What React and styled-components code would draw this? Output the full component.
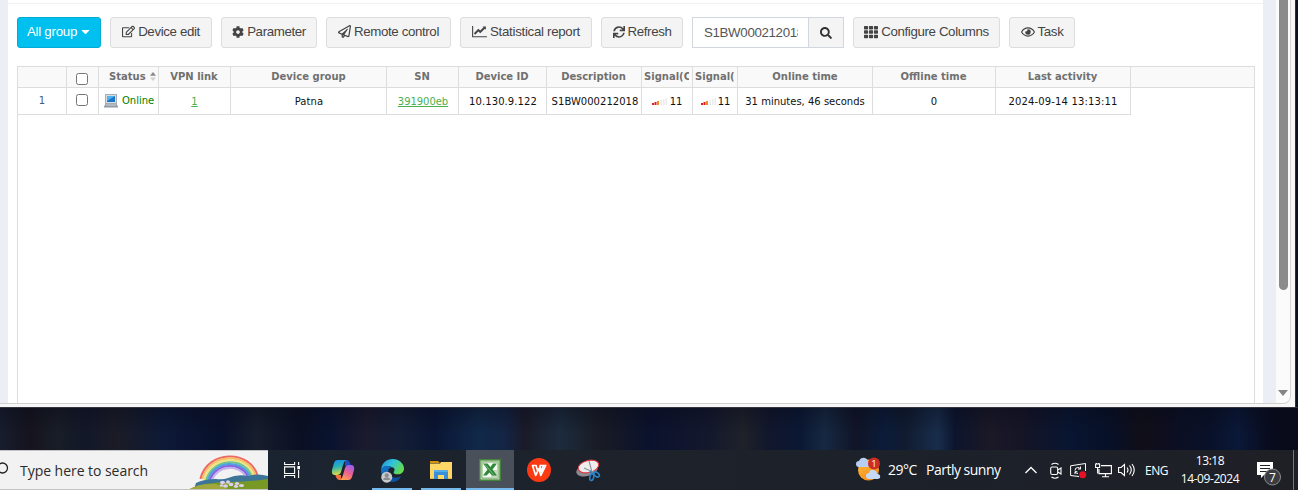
import React from "react";
import styled, { createGlobalStyle } from "styled-components";
import { FaRegEdit, FaCog, FaRegPaperPlane, FaSearch, FaTh, FaRegEye, FaSync, FaCaretDown } from "react-icons/fa";

const GlobalStyle = createGlobalStyle`
  * { box-sizing: border-box; }
  body { margin: 0; background: #0a0f20; overflow: hidden; }
`;

const Desktop = styled.div`
  width: 1298px;
  height: 490px;
  overflow: hidden;
  display: flex;
  flex-direction: column;
  background: #0a0f20;
`;

const BrowserWindow = styled.div`
  width: 1296px;
  height: 407px;
  display: flex;
  flex: none;
  padding: 0 4px 3px 0;
  background: #f7f7f7;
  border-right: 1px solid #2b2e3c;
`;

const Viewport = styled.div`
  display: flex;
  flex: 1;
  background: #ebeff5;
  border-right: 1px solid #d5d5d5;
  border-bottom: 1px solid #d0d0d0;
  border-bottom-right-radius: 8px;
  overflow: hidden;
  padding-left: 8px;
`;

const Panel = styled.main`
  width: 1255px;
  height: 403px;
  background: #fff;
  padding: 3px 8px 0 9px;
  background-image: linear-gradient(#f1f1f1, #f1f1f1);
  background-size: 100% 1px;
  background-position: 0 3px;
  background-repeat: no-repeat;
`;

const Toolbar = styled.div`
  display: flex;
  gap: 9px;
  margin-top: 14px;
  height: 31px;
`;

const Button = styled.button`
  width: ${(p) => p.$w}px;
  height: 31px;
  display: flex;
  align-items: center;
  justify-content: center;
  gap: ${(p) => (p.$primary ? 2 : 3)}px;
  padding: ${(p) => (p.$primary ? "0 0 2px 1px" : "0 0 2px")};
  border-radius: 3px;
  border: 1px solid ${(p) => (p.$primary ? "#00acd6" : "#ddd")};
  background: ${(p) => (p.$primary ? "#00c0ef" : "#f4f4f4")};
  color: ${(p) => (p.$primary ? "#fff" : "#444")};
  font: 13.3px "Liberation Sans", Arial, sans-serif;
  letter-spacing: ${(p) => p.$ls ?? -0.37}px;
  white-space: nowrap;
  svg { flex: none; }
`;

const SearchGroup = styled.div`
  display: flex;
  width: 152px;
  border: 1px solid #d2d6de;
`;

const SearchField = styled.div`
  width: 116px;
  padding: 0 10px 0 11px;
  border-right: 1px solid #d2d6de;
  font: 13.3px/29px "Liberation Sans", Arial, sans-serif;
  color: #555;
  letter-spacing: -0.34px;
  span { display: block; overflow: hidden; white-space: nowrap; }
`;

const SearchButton = styled.div`
  flex: 1;
  display: flex;
  align-items: center;
  justify-content: center;
  background: #f4f4f4;
  color: #333;
`;

const Grid = styled.section`
  width: 1238px;
  height: 337px;
  margin-top: 18px;
  border: 1px solid #ddd;
  border-bottom: 0;
  font-family: "DejaVu Sans", Verdana, sans-serif;
  font-size: 10px;
`;

const Row = styled.div`
  display: grid;
  grid-template-columns: 49px 32px 60px 72px 156px 72px 88px 95px 51px 45px 135px 123px 135px 123px;
  height: ${(p) => (p.$head ? 21 : 27)}px;
  background: ${(p) => (p.$head ? "#f9f9f9" : "#fff")};
  font-weight: ${(p) => (p.$head ? "bold" : "normal")};
  color: ${(p) => (p.$head ? "#707070" : "#111")};
`;

const Cell = styled.div`
  display: flex;
  align-items: center;
  justify-content: ${(p) => (p.$start ? "flex-start" : "center")};
  padding: ${(p) => p.$pad || "0 0 1px"};
  border-right: ${(p) => (p.$last ? "0" : "1px solid #ddd")};
  border-bottom: 1px solid #ddd;
  overflow: hidden;
  white-space: nowrap;
  letter-spacing: ${(p) => p.$ls || 0}px;
  color: ${(p) => p.$color || "inherit"};
`;

const Value = styled(Cell)`
  padding: 1px 0 0 ${(p) => p.$indent || 0}px;
`;

const Clip = styled.span`
  display: block;
  width: ${(p) => p.$w}px;
  overflow: hidden;
`;

const Check = styled.span`
  width: 12px;
  height: 12px;
  border: 1px solid #767676;
  border-radius: 2.5px;
  background: #fff;
`;

const Link = styled.a`
  color: #4caf50;
  text-decoration: underline;
`;

const ScrollTrack = styled.div`
  margin-left: 13px;
  width: 15px;
  height: 403px;
  background: #fbfbfb;
  display: flex;
  flex-direction: column;
  align-items: center;
  justify-content: space-between;
  padding-bottom: 7px;
`;

const Thumb = styled.div`
  width: 9px;
  height: 290px;
  background: #8b8b8b;
  border-radius: 0 0 5px 5px;
`;

const Wallpaper = styled.div`
  height: 43px;
  flex: none;
  border-top: 1px solid #34343c;
  background:
    linear-gradient(rgba(8, 10, 24, 0.45), rgba(8, 10, 24, 0.12) 60%),
    linear-gradient(90deg, #191f30 0, #17151f 30px, #1b2029 58px, #14192b 85px, #1d1e28 118px, #0d1b3b 165px,
      #08112d 222px, #18202f 257px, #0b1024 300px, #091432 330px, #1e1c30 365px, #142039 400px, #0a1737 435px,
      #122d50 478px, #15284a 505px, #1d1c2b 525px, #1f3042 560px, #1b1d26 600px, #0b1330 650px, #161a30 710px,
      #22252b 743px, #121830 770px, #0b1a38 800px, #182d48 825px, #121629 855px, #0b1e3e 885px, #121d33 905px,
      #1a3252 938px, #0d1630 955px, #1e1a28 990px, #161629 1025px, #081735 1070px, #071129 1110px, #110f18 1140px,
      #0c1025 1180px, #09122b 1210px, #0b1a3d 1238px, #080b1d 1270px, #090b1b 1298px);
`;

const Taskbar = styled.footer`
  height: 40px;
  flex: none;
  display: flex;
  background: linear-gradient(90deg, #1a2430 268px, #1c232d 420px, #1e222a 650px, #1c212a 900px, #1f2026 1298px);
  font-family: "Open Sans", "Noto Sans", sans-serif;
  color: #fff;
`;

const SearchBox = styled.div`
  width: 268px;
  height: 40px;
  display: flex;
  align-items: center;
  background: #f2f2f2;
  border-top: 1px solid #c4c4c4;
  border-bottom: 1px solid #c4c4c4;
  color: #2b2b2b;
  font-size: 14px;
  overflow: hidden;
`;

const SearchText = styled.span`
  width: 168px;
  margin-left: 11px;
  padding-top: 1px;
  letter-spacing: -0.04px;
  white-space: nowrap;
`;

const Task = styled.div`
  width: 48px;
  height: 40px;
  margin-left: 1px;
  display: flex;
  align-items: center;
  justify-content: center;
  background: ${(p) => (p.$active ? "#4a5059" : "transparent")};
  box-shadow: ${(p) => (p.$active ? "inset 0 -2px #76b9ed" : "none")};
  ${(p) => p.$open && "background: linear-gradient(#76b9ed, #76b9ed) 4px 38px / 40px 2px no-repeat;"}
`;

const TaskList = styled.div`
  display: flex;
  width: 588px;
  padding-left: 1px;
`;

const Slot = styled.div`
  width: ${(p) => p.$w}px;
  height: 40px;
  flex: none;
  display: flex;
  align-items: center;
  padding-top: ${(p) => p.$drop || 0}px;
  padding-bottom: ${(p) => p.$lift || 0}px;
  font-size: ${(p) => p.$size || 14}px;
  letter-spacing: ${(p) => p.$ls || 0}px;
  white-space: nowrap;
`;

const Clock = styled.div`
  width: 70px;
  height: 40px;
  display: flex;
  flex-direction: column;
  align-items: center;
  padding-top: 2px;
  font-size: 12px;
  line-height: 18px;
  letter-spacing: -0.42px;
  white-space: nowrap;
`;

const ShowDesktop = styled.div`
  width: 5px;
  height: 40px;
  border-left: 1px solid #73757a;
`;

const ChartIcon = () => (
  <svg width="15" height="13" viewBox="0 0 16 14" fill="currentColor">
    <path d="M0 1h1.2v11H16v1.2H0z" />
    <path d="M14.9 1.5v3.6l-1.1-1.1-5 5-2-2-3.4 3.4-1.5-1.5 4.9-4.9 2 2 3.5-3.5-1.1-1z" />
  </svg>
);

const SortIcon = () => (
  <svg width="6" height="9" viewBox="0 0 6 9">
    <path d="M0 3.8 3 0l3 3.8z" fill="#888" />
    <path d="M0 5.5h6L3 9z" fill="#d0d0d0" />
  </svg>
);

const ComputerIcon = () => (
  <svg width="14" height="14" viewBox="0 0 14 14">
    <rect x="1.5" y=".5" width="11" height="9" fill="#d8dde2" stroke="#a5adb5" />
    <rect x="3" y="2" width="8" height="6" fill="#1976ca" />
    <path d="M3 2h8L3 7z" fill="#50b5ee" />
    <path d="M1.5 10h11l1.5 2.5v1H0v-1z" fill="#8e9aa5" />
    <path d="M2 11h10" stroke="#d3d9df" />
  </svg>
);

const SignalIcon = () => (
  <svg width="16" height="7" viewBox="0 0 16 7">
    <path d="M0 5h2v2H0z M2.5 4h2v3h-2z" fill="#e21b22" />
    <path d="M5 3h2v4H5z" fill="#f58a20" />
    <path d="M8.5 2h1.5v5H8.5z M11 1h1.5v6H11z M13.5 0H15v7h-1.5z" fill="#ebebeb" />
  </svg>
);

const RainbowArt = () => (
  <svg width="80" height="38" viewBox="188 451 80 38">
    <g fill="none" strokeWidth="2.1">
      <path d="M200.500 479C207 449.500 251 449.500 257.500 476" stroke="#ee6865" />
      <path d="M202.400 479C209 452 249 452 255.500 476" stroke="#f7bd68" />
      <path d="M204.300 480C211 454.500 247 454.500 253.500 476" stroke="#efe580" />
      <path d="M206.200 480C213 457 245 457 251.500 476" stroke="#72c58c" />
      <path d="M208.100 480C214 459.500 243 459.500 249.500 476" stroke="#4fa0e3" />
      <path d="M210 480C216 462 241 462 247.500 476" stroke="#8760dc" />
      <path d="M212 480C218 464.500 239 464.500 245.500 476" stroke="#c3b0ee" />
    </g>
    <path d="M196 483q8-4 20-4 7 1 12-1 9-4 20-2 10-3 20 0v13h-74z" fill="#3d7599" />
    <path d="M188 490q15-8 41-8 20 0 39-3v11z" fill="#789a24" />
    <path d="M188 490q9-7 28-6l14 6z" fill="#a1a73c" />
    <g fill="#dcd0f2">
      <ellipse cx="222.500" cy="482.500" rx="2.500" ry="1.700" /><ellipse cx="228" cy="482" rx="2" ry="1.700" />
      <ellipse cx="225.500" cy="486" rx="2.500" ry="1.700" /><ellipse cx="221.500" cy="485.500" rx="1.700" ry="1.200" />
      <ellipse cx="231" cy="484.500" rx="2.300" ry="1.700" /><ellipse cx="237" cy="483.500" rx="2.200" ry="1.600" />
      <ellipse cx="236" cy="486.500" rx="2.200" ry="1.400" /><ellipse cx="241.500" cy="485.500" rx="2.600" ry="1.600" />
    </g>
    <circle cx="225.500" cy="484" r=".9" fill="#e0a840" /><circle cx="238" cy="485" r=".7" fill="#e0a840" />
  </svg>
);

const TaskViewIcon = () => (
  <svg width="20" height="16" viewBox="0 0 20 16" fill="none" stroke="#fff" strokeWidth="1.1">
    <path d="M.6 0v2.500h10V0 M.6 4.900h10v6.600H.6z M.6 16v-2.500h10V16 M14.600 0v3 M14.600 8v8" />
    <path d="M13.300 4h2.700v3.200h-2.700z" fill="#fff" stroke="none" />
  </svg>
);

const CopilotIcon = () => (
  <svg width="24" height="24" viewBox="0 0 24 24">
    <defs>
      <linearGradient id="cpA" x1="0" y1="0" x2=".2" y2="1"><stop stopColor="#168df0" /><stop offset=".5" stopColor="#28b3b4" /><stop offset="1" stopColor="#d7d944" /></linearGradient>
      <linearGradient id="cpB" x1=".7" y1="0" x2=".2" y2="1"><stop stopColor="#a15bef" /><stop offset=".5" stopColor="#ef638b" /><stop offset="1" stopColor="#ffa54d" /></linearGradient>
    </defs>
    <path d="M14 2h2q2 0 3 3l1 3h-6z" fill="#1c4cc8" />
    <path d="M6.500 2H15q-2 1-3 5l-2 7q-1 3-4 3H4q-4 0-3-5l2-7q1-3 3.500-3z" fill="url(#cpA)" />
    <path d="M17.500 22H9q2-1 3-5l2-7q1-3 4-3h2q4 0 3 5l-2 7q-1 3-3.500 3z" fill="url(#cpB)" />
    <path d="M10 22H8q-2 0-3-3l-.7-2H10z" fill="#f3703f" />
  </svg>
);

const EdgeIcon = () => (
  <svg width="25" height="25" viewBox="0 0 26 26">
    <defs>
      <linearGradient id="edA" x1="0" y1="0" x2="1" y2=".5"><stop stopColor="#2389d8" /><stop offset=".5" stopColor="#30c3da" /><stop offset="1" stopColor="#63da50" /></linearGradient>
      <linearGradient id="edB" x1="0" y1="0" x2="1" y2="1"><stop stopColor="#1479cd" /><stop offset="1" stopColor="#0b4793" /></linearGradient>
    </defs>
    <path d="M1 12C2 5 7 1 13 1c7 0 12 5 12 10 0 4-3 6-6.500 6-3 0-5-1-4-3 1-1 1-3-1-4C9 7 3 8 1 12z" fill="url(#edA)" />
    <path d="M1 12c2-4 8-5 12-2-4-1-5 3-4 6 1 4 7 6 13 3-2 4-5 6-9 6C6 25 1 20 1 12z" fill="url(#edB)" />
    <circle cx="7" cy="20" r="5.700" fill="#c7c9ca" />
    <circle cx="7" cy="18" r="2.200" fill="#8a8d90" />
    <path d="M3.400 23q0-3 3.600-3t3.600 3z" fill="#8a8d90" />
  </svg>
);

const ExplorerIcon = () => (
  <svg width="22" height="20" viewBox="0 0 22 20">
    <path d="M0 1h8l2 2H0z" fill="#d99009" />
    <path d="M0 3.500h10l1-1.500h11v17H0z" fill="#ffd766" />
    <path d="M4 19v-8q0-1 1-1h12q1 0 1 1v8h-4v-4H8v4z" fill="#3990d9" />
    <path d="M4 12v-1q0-1 1-1h12q1 0 1 1v1z" fill="#56ade9" />
    <path d="M0 18h4v1H0zM18 18h4v1h-4z" fill="#edb940" />
  </svg>
);

const ExcelIcon = () => (
  <svg width="22" height="22" viewBox="0 0 22 22">
    <path d="M.75.75h20.500v20.500H.75z" fill="#b9d6ae" stroke="#44833d" strokeWidth="1.500" />
    <path d="M3 3h16v16H3z" fill="#f4faf1" stroke="#7fae71" />
    <path d="M14 11h4.500v7.500H12z" fill="#c5d8bd" />
    <path d="M4 4.500h4.500l3 3.500 2.500-3.500h4l-4.500 6 4.500 6h-5l-2.500-3-3 3H4l4.500-6z" fill="#30883c" />
    <path d="m6 5.500 8.500 10" stroke="#7dbb72" />
  </svg>
);

const WpsIcon = () => (
  <svg width="24" height="24" viewBox="0 0 24 24">
    <circle cx="12" cy="12" r="12" fill="#fb3a13" />
    <path d="M4.800 7.500h4.700M5.500 7.500 8.700 17.500 12 10.500 13.800 17.500 18.700 7.500H12.500M9 7.500l1.700 5.500M12.800 7.500 14.300 13.500 16.500 7.500" fill="none" stroke="#fff" strokeWidth="1.700" strokeLinejoin="round" />
  </svg>
);

const SnipIcon = () => (
  <svg width="25" height="24" viewBox="0 0 25 24">
    <ellipse cx="11" cy="12" rx="11" ry="6" transform="rotate(-16 11 12)" fill="#8a8b91" />
    <ellipse cx="12.500" cy="8.500" rx="10.500" ry="6" transform="rotate(-14 12.500 8.500)" fill="#eee" stroke="#dd3944" strokeWidth="1.100" />
    <path d="m13 3 3 11M8 10l9 4" stroke="#8e949a" strokeWidth="1.100" />
    <g fill="none" stroke="#2a83c7" strokeWidth="1.600">
      <ellipse cx="15.800" cy="19" rx="1.900" ry="3.500" transform="rotate(15 15.800 19)" />
      <ellipse cx="20.500" cy="16.500" rx="3.200" ry="1.900" transform="rotate(35 20.500 16.500)" />
      <path d="m14 13 2.500 3 2-1" />
    </g>
  </svg>
);

const WeatherIcon = () => (
  <svg width="25" height="25" viewBox="0 0 25 25">
    <defs><linearGradient id="sun" x2=".6" y2="1"><stop stopColor="#ffc13b" /><stop offset="1" stopColor="#f48b18" /></linearGradient></defs>
    <circle cx="12.500" cy="13" r="10.500" fill="url(#sun)" />
    <path d="M3 10a3 3 0 0 1 0-6q2-4 6-3 3 1 3 4 3 1 2 4l-2 1z" fill="#b9cff2" />
    <path d="M13 22a3 3 0 0 1 0-6q1-4 5-3 3 1 3 4 4 0 3 4l-2 1z" fill="#c4d8f7" />
    <circle cx="18" cy="6.500" r="6" fill="#cc2d24" />
    <text x="18" y="10" textAnchor="middle" fontSize="9.500" fontFamily="Open Sans, sans-serif" fill="#fff">1</text>
  </svg>
);

const ChevronIcon = () => (
  <svg width="12" height="8" viewBox="0 0 12 8" fill="none" stroke="#fff" strokeWidth="1.300"><path d="m.5 7 5.500-5.500L11.500 7" /></svg>
);

const MeetIcon = () => (
  <svg width="12" height="17" viewBox="0 0 12 17" fill="none" stroke="#fff" strokeWidth="1.100">
    <rect x=".7" y="5" width="7" height="7.500" rx="1.500" />
    <path d="M7.700 8 11 6v6L7.700 10M1.500 2.500q3.500-2.500 7 0M1.500 15q3.500 2.500 7 0" />
  </svg>
);

const UpdateIcon = () => (
  <svg width="17" height="17" viewBox="0 0 17 17" fill="none" stroke="#fff" strokeWidth="1">
    <path d="M9 14.500.6 13.500V3.800L15.500 1.500V9M5 8.500q0-3 2.800-3 1.500 0 2.700 1.500M10.500 4.500V7H8M5 12V9.700h2.300M5 10q1 1.500 3 1.400" />
    <circle cx="12.700" cy="12.700" r="3.500" fill="#e81123" stroke="none" />
  </svg>
);

const NetworkIcon = () => (
  <svg width="17" height="15" viewBox="0 0 17 15" fill="none" stroke="#fff" strokeWidth="1.100">
    <path d="M6 2.600h10.400v8H4V6M10.500 10.600v3M7 13.800h7M.6 1h4v3.500h-4zM2.600 4.500v6M1.500 0v1M3.700 0v1" />
  </svg>
);

const VolumeIcon = () => (
  <svg width="17" height="16" viewBox="0 0 17 16" fill="none" stroke="#fff" strokeWidth="1.100">
    <path d="M.6 5.500H3L6.500 2.500v11L3 10.500H.6zM9 5.500q2 2.500 0 5M11.500 3.500q3.500 4.500 0 9M14 2q4.500 6 0 12" />
  </svg>
);

const NotificationIcon = () => (
  <svg width="25" height="25" viewBox="0 0 25 25">
    <path d="M0 1h16v13H7l-3 3v-3H0z" fill="#fff" />
    <path d="M3 4.500h10M3 7.500h10M3 10.500h7" stroke="#202329" />
    <circle cx="15.500" cy="16" r="8" fill="#3b3c40" stroke="#8b8c8f" />
    <text x="15.500" y="20.500" textAnchor="middle" fontSize="12" fontFamily="Open Sans, sans-serif" fill="#fff">7</text>
  </svg>
);

const DeviceTable = () => (
  <Grid>
    <Row $head>
      <Cell />
      <Cell $pad="4px 2px 0 0"><Check /></Cell>
      <Cell $start $pad="0 0 1px 10px">Status<span style={{ width: 4 }} /><SortIcon /></Cell>
      <Cell $pad="0 1px 1px 0">VPN link</Cell>
      <Cell>Device group</Cell>
      <Cell $pad="0 1px 1px 0">SN</Cell>
      <Cell $pad="0 1px 1px 0">Device ID</Cell>
      <Cell $pad="0 1px 1px 0">Description</Cell>
      <Cell $start $pad="0 0 1px 2px"><Clip $w={45}>Signal(C</Clip></Cell>
      <Cell $start $pad="0 0 1px 2px"><Clip $w={41}>Signal(</Clip></Cell>
      <Cell>Online time</Cell>
      <Cell $pad="0 1px 1px 0">Offline time</Cell>
      <Cell $pad="0 1px 1px 0">Last activity</Cell>
      <Cell $last />
    </Row>
    <Row>
      <Cell $color="#4a5a75">1</Cell>
      <Cell $pad="0 2px 3px 0"><Check /></Cell>
      <Cell $start $pad="0 0 1px 5px" $color="#008000"><ComputerIcon /><span style={{ width: 4 }} />Online</Cell>
      <Value><Link>1</Link></Value>
      <Value $indent={1} $ls={0.1}>Patna</Value>
      <Value $indent={1} $ls={-0.05}><Link>391900eb</Link></Value>
      <Value $indent={1} $ls={0.08}>10.130.9.122</Value>
      <Value $indent={2} $ls={0.03}>S1BW000212018</Value>
      <Value><SignalIcon /><span style={{ width: 2 }} />11</Value>
      <Value $indent={1}><SignalIcon /><span style={{ width: 1 }} />11</Value>
      <Value>31 minutes, 46 seconds</Value>
      <Value>0</Value>
      <Value $ls={0.16}>2024-09-14 13:13:11</Value>
    </Row>
  </Grid>
);

export default function App() {
  return (
    <Desktop>
      <GlobalStyle />
      <BrowserWindow>
        <Viewport>
          <Panel>
            <Toolbar>
              <Button $w={84} $primary $ls={-0.25}>All group<FaCaretDown size={13} /></Button>
              <Button $w={102}><FaRegEdit size={13} />Device edit</Button>
              <Button $w={96}><FaCog size={12} />Parameter</Button>
              <Button $w={125}><FaRegPaperPlane size={13} />Remote control</Button>
              <Button $w={132} $ls={-0.3}><ChartIcon />Statistical report</Button>
              <Button $w={82}><FaSync size={12} />Refresh</Button>
              <SearchGroup>
                <SearchField><span>S1BW000212018</span></SearchField>
                <SearchButton><FaSearch size={12} /></SearchButton>
              </SearchGroup>
              <Button $w={147}><FaTh size={14} />Configure Columns</Button>
              <Button $w={66}><FaRegEye size={14} />Task</Button>
            </Toolbar>
            <DeviceTable />
          </Panel>
          <ScrollTrack>
            <Thumb />
            <svg width="10" height="6" viewBox="0 0 10 6"><path d="M0 0h10L5 6z" fill="#858585" /></svg>
          </ScrollTrack>
        </Viewport>
      </BrowserWindow>
      <Wallpaper />
      <Taskbar>
        <SearchBox>
          <svg width="9" height="18" viewBox="0 0 9 18"><circle cx="2.500" cy="7" r="5" fill="none" stroke="#222" strokeWidth="1.300" /></svg>
          <SearchText>Type here to search</SearchText>
          <RainbowArt />
        </SearchBox>
        <TaskList>
          <Task><TaskViewIcon /></Task>
          <Task><CopilotIcon /></Task>
          <Task $open><EdgeIcon /></Task>
          <Task $open><ExplorerIcon /></Task>
          <Task $active><ExcelIcon /></Task>
          <Task><WpsIcon /></Task>
          <Task><SnipIcon /></Task>
        </TaskList>
        <Slot $w={32} $lift={2}><WeatherIcon /></Slot>
        <Slot $w={38} $ls={-0.5} $lift={1}>29°C</Slot>
        <Slot $w={99} $ls={-0.5} $lift={1}>Partly sunny</Slot>
        <Slot $w={25}><ChevronIcon /></Slot>
        <Slot $w={20}><MeetIcon /></Slot>
        <Slot $w={25}><UpdateIcon /></Slot>
        <Slot $w={23}><NetworkIcon /></Slot>
        <Slot $w={27}><VolumeIcon /></Slot>
        <Slot $w={30} $size={12} $ls={-0.5}>ENG</Slot>
        <Clock><span>13:18</span><span>14-09-2024</span></Clock>
        <Slot $w={12} />
        <Slot $w={36} $drop={6}><NotificationIcon /></Slot>
        <ShowDesktop />
      </Taskbar>
    </Desktop>
  );
}
